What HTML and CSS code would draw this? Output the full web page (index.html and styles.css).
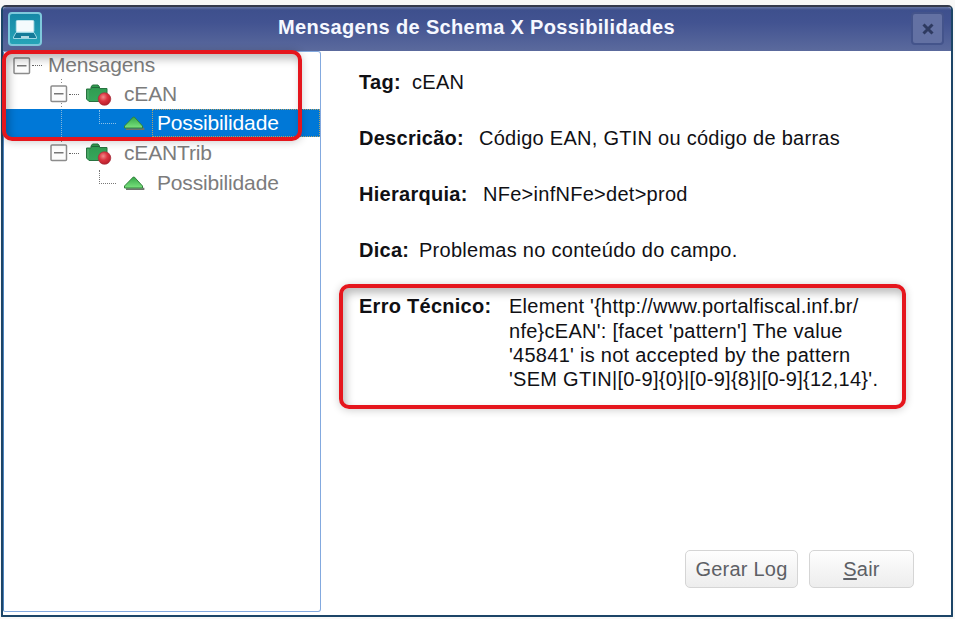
FILE: index.html
```html
<!DOCTYPE html>
<html lang="pt-BR">
<head>
<meta charset="utf-8">
<title>Mensagens de Schema X Possibilidades</title>
<link rel="stylesheet" href="styles.css">
</head>
<body>
<svg class="defs" width="0" height="0">
  <defs>
    <linearGradient id="teal" x1="0" y1="0" x2="0" y2="1"><stop offset="0" stop-color="#1687a6"/><stop offset="1" stop-color="#26a5b8"/></linearGradient>
    <linearGradient id="green" x1="0" y1="0" x2="0" y2="1"><stop offset="0" stop-color="#2f9a4e"/><stop offset="1" stop-color="#36a75c"/></linearGradient>
    <radialGradient id="red" cx=".4" cy=".35" r=".65"><stop offset="0" stop-color="#f08a8a"/><stop offset=".5" stop-color="#dc3440"/><stop offset="1" stop-color="#b81f2c"/></radialGradient>
    <linearGradient id="leaf" x1="0" y1="0" x2="0" y2="1"><stop offset="0" stop-color="#35a748"/><stop offset="1" stop-color="#7be37e"/></linearGradient>
    <symbol id="toggle" viewBox="0 0 18 18"><rect x="1" y="1" width="15.5" height="15.5" rx="1" fill="#fcfcfc" stroke="#8c8c8c" stroke-width="1.5"/><path d="M4 8.8h9.5" stroke="#777" stroke-width="1.4"/></symbol>
    <symbol id="folder" viewBox="0 0 28 24"><path d="M1.500 6H6V4l1.500-2H13l1.500 2v1.500H22V18.500H4L1.500 16Z" fill="url(#green)" stroke="#287340" stroke-width="1"/><path d="M3 7v9" stroke="#5fae74"/><path d="M6.500 4.500h8" stroke="#23683a"/><circle cx="19.500" cy="16" r="6.300" fill="url(#red)" stroke="#a83440" stroke-width=".7"/></symbol>
    <symbol id="triangle" viewBox="0 0 22 16"><path d="M3 14.200h17.500v-1.500" fill="none" stroke="#6d756c" stroke-width="1.700"/><path d="M10.300 2 1.500 11v2H19.500v-2L11.300 2Z" fill="url(#leaf)" stroke="#32813c" stroke-width="1"/></symbol>
  </defs>
</svg>
<main class="window">
  <header class="titlebar">
    <svg class="app-icon" viewBox="0 0 34 34"><rect x="1" y="1" width="32" height="32" rx="3" fill="url(#teal)" stroke="#7ec9dc" stroke-width="2"/><rect x="8.3" y="8.5" width="17.5" height="11.5" rx="1" fill="#f4fbfd" stroke="#c1e3ec"/><path d="M8 20.5 5.5 25v1.5h23V25L26 20.5Z" fill="#147b99" stroke="#9ad6e4" stroke-width="1"/><path d="M13 25h8" stroke="#e3f6fa" stroke-width="1.5"/></svg>
    <h1 class="title"><span>Mensagens de Schema X Possibilidades</span></h1>
    <button class="close" aria-label="Fechar"><svg viewBox="0 0 12 12"><path d="m1.5 1.5 9 9m0-9-9 9" stroke="#2e3a60" stroke-width="3"/></svg></button>
  </header>
  <div class="content">
    <nav class="tree">
      <div class="row root"><svg class="toggle"><use href="#toggle"/></svg><i class="dash"></i><span class="root-label">Mensagens</span></div>
      <div class="row branch"><svg class="toggle"><use href="#toggle"/></svg><i class="dash"></i><svg class="folder"><use href="#folder"/></svg><span>cEAN</span></div>
      <div class="row leaf selected"><i class="trunk"></i><i class="elbow"></i><svg class="triangle"><use href="#triangle"/></svg><span class="focus">Possibilidade</span></div>
      <div class="row branch last"><svg class="toggle"><use href="#toggle"/></svg><i class="dash"></i><svg class="folder"><use href="#folder"/></svg><span>cEANTrib</span></div>
      <div class="row leaf"><i class="trunk none"></i><i class="elbow"></i><svg class="triangle"><use href="#triangle"/></svg><span class="focus">Possibilidade</span></div>
    </nav>
    <section class="details">
      <dl class="fields">
        <div class="field tag"><dt>Tag:</dt><dd>cEAN</dd></div>
        <div class="field desc"><dt>Descricão:</dt><dd>Código EAN, GTIN ou código de barras</dd></div>
        <div class="field hier"><dt>Hierarquia:</dt><dd>NFe&gt;infNFe&gt;det&gt;prod</dd></div>
        <div class="field tip"><dt>Dica:</dt><dd>Problemas no conteúdo do campo.</dd></div>
        <div class="field error"><dt>Erro Técnico:</dt><dd>Element '{http://www.portalfiscal.inf.br/<br>nfe}cEAN': [facet 'pattern'] The value<br>'45841' is not accepted by the pattern<br>'SEM GTIN|[0-9]{0}|[0-9]{8}|[0-9]{12,14}'.</dd></div>
      </dl>
      <footer class="actions"><button class="btn log">Gerar Log</button><button class="btn exit"><u>S</u>air</button></footer>
    </section>
  </div>
</main>
<div class="callout callout-tree"></div>
<div class="callout callout-error"></div>
</body>
</html>
```
FILE: styles.css
```css
* { box-sizing: border-box; }
body { margin: 0; height: 619px; padding: 5px 2px 2px 1px; overflow: hidden; background: #f8f8f7; font: 20px/24.3px "Liberation Sans", Arial, sans-serif; color: #101014; }
.defs { position: absolute; }
.window { height: 612px; display: flex; flex-direction: column; background: #fff; border: 2px solid #1c4567; border-top-color: #343a4b; border-radius: 5px 5px 1px 1px; overflow: hidden; }
.titlebar { height: 44px; flex: none; display: flex; align-items: center; padding: 0 7px 1px 5px; background: linear-gradient(#6675a3 0, #3e508d 3px, #425391 35%, #5b6a9d 100%); }
.app-icon { width: 34px; height: 34px; }
.title { flex: 1; margin: 0 0 3px; text-align: center; color: #f6f8ff; font-size: 20px; line-height: 24px; letter-spacing: .34px; }
.close { width: 33px; height: 33px; padding: 0; display: grid; place-items: center; background: #6371a3; border: 2px solid #44548b; border-radius: 4px; }
.close svg { width: 12px; height: 12px; }
.content { flex: 1; display: flex; min-height: 0; }
.tree { width: 318px; margin-bottom: 3px; border: 1.5px solid #83a9df; border-left-color: #4d83bd; border-radius: 0 3px 3px 2px; color: #7c7c7c; font-size: 21px; letter-spacing: -.16px; }
.row { display: flex; align-items: center; height: 30px; }
.toggle { width: 18px; height: 18px; flex: none; }
.dash { width: 10px; height: 0; margin-left: 1px; border-top: 1px dotted #666; flex: none; }
.root { height: 27px; padding-left: 9px; }
.root-label { margin-left: 6px; }
.branch { padding-left: 46px; background: repeating-linear-gradient(#888 0 1px, transparent 1px 3px) 57px 0 / 1px 6px no-repeat, repeating-linear-gradient(#888 0 1px, transparent 1px 3px) 57px 24px / 1px 6px no-repeat; }
.branch.last { background-size: 1px 6px, 0 0; }
.folder { width: 28px; height: 24px; margin: 2px 0 0 6px; flex: none; }
.branch span { margin-left: 11px; }
.trunk { width: 1px; height: 27px; margin-left: 57px; border-left: 1px dotted #80b4dd; }
.trunk.none { border: 0; }
.elbow { width: 17px; height: 14px; margin: 0 0 13px 37px; border: dotted #777; border-width: 0 0 1px 1px; flex: none; }
.triangle { width: 22px; height: 16px; margin-left: 7px; flex: none; }
.focus { flex: 1; height: 28px; line-height: 26px; margin-left: 7px; padding-left: 4px; border: 1px dotted transparent; }
.selected { height: 28px; margin: 0 0 1px; background: #0078d7; color: #fff; }
.selected .elbow { border-color: #8cc2ea; }
.selected .focus { border-color: #b0a36c; }
.details { flex: 1; display: flex; flex-direction: column; padding: 19px 37px 27px 38px; }
.fields { margin: 0; flex: 1; letter-spacing: .27px; }
.field { display: flex; margin-bottom: 31.8px; white-space: nowrap; }
dt { font-weight: bold; flex: none; }
dd { margin: 0; }
.tag dt { width: 53px; }
.desc dt { width: 120px; }
.hier dt { width: 124px; }
.tip dt { width: 60px; }
.error dt { width: 150px; }
.actions { display: flex; justify-content: flex-end; gap: 11px; }
.btn { height: 38px; padding: 0; border: 1.5px solid #d5d5d5; border-radius: 5px; background: linear-gradient(#fefefe, #ededed); color: #5d6065; font: 20px/24px "Liberation Sans", Arial, sans-serif; letter-spacing: .22px; }
.log { width: 113px; }
.exit { width: 105px; }
.btn u { text-underline-offset: 2px; }
.callout { position: absolute; border: 4px solid #e5161d; border-radius: 10px; box-shadow: 0 1px 9px #0003, inset 3px 5px 9px #0004; pointer-events: none; }
.callout-tree { left: 2px; top: 50px; width: 300px; height: 91px; }
.callout-error { left: 339px; top: 284px; width: 567px; height: 125px; }
```
